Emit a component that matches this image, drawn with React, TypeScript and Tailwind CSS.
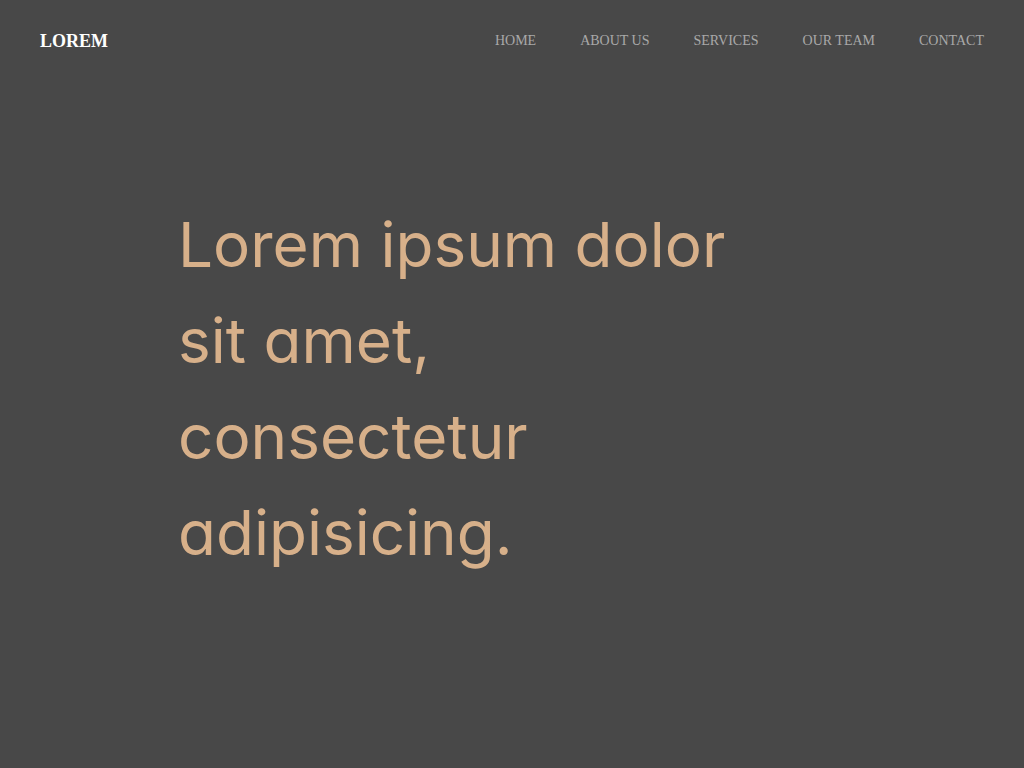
const links = ["HOME", "ABOUT US", "SERVICES", "OUR TEAM", "CONTACT"];

export default function App() {
  return (
    <div className="min-h-screen bg-[#484848]">
      <header className="flex items-center justify-between px-10 h-20">
        <a
          href="#"
          className="text-white font-bold text-[18px] font-['Liberation_Serif',serif] translate-y-px"
        >
          LOREM
        </a>
        <nav className="flex gap-11 text-[14px] text-[#a9a9a9] font-['Liberation_Serif',serif]">
          {links.map((l) => (
            <a key={l} href="#">
              {l}
            </a>
          ))}
        </nav>
      </header>
      <main className="pl-[178px] pt-[117px]">
        <h1 className="max-w-[600px] text-[62px] leading-[96px] text-[#d7b08a] font-['Inter',sans-serif] [font-feature-settings:'cv11']">
          Lorem ipsum dolor sit amet, consectetur adipisicing.
        </h1>
      </main>
    </div>
  );
}
